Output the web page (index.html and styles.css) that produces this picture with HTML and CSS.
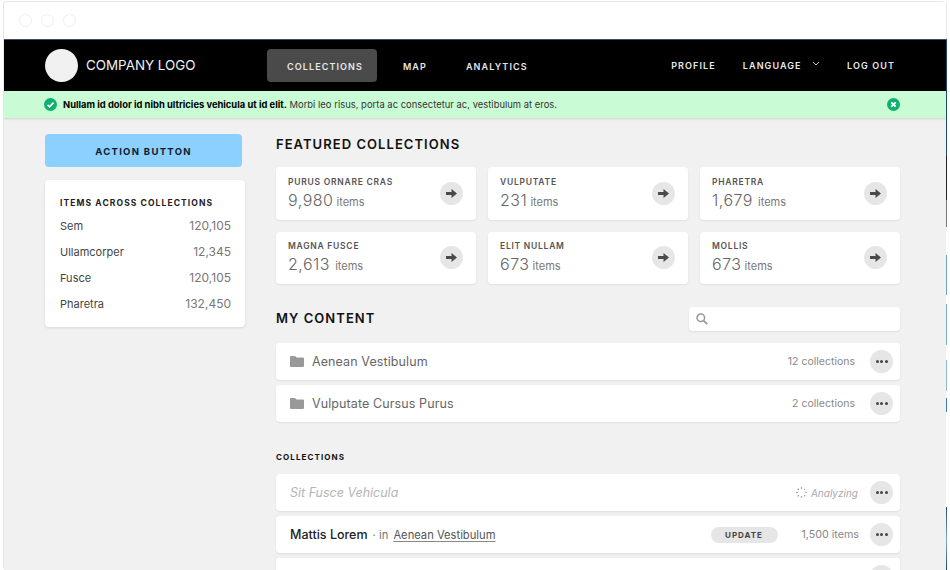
FILE: index.html
```html
<!DOCTYPE html>
<html>
<head>
    <meta charset="UTF-8">
    <title>Collections</title>
    <link rel="stylesheet" href="styles.css">
</head>
<body>
    <div class="window">
        <div class="titlebar">
            <span class="light"></span>
            <span class="light"></span>
            <span class="light"></span>
        </div>
        <div class="nav">
            <div class="logo">
                <span class="logo-mark"></span>
                <span class="logo-text">COMPANY LOGO</span>
            </div>
            <ul class="nav-left">
                <li class="current">COLLECTIONS</li>
                <li>MAP</li>
                <li>ANALYTICS</li>
            </ul>
            <ul class="nav-right">
                <li>PROFILE</li>
                <li class="lang">LANGUAGE
                    <svg width="8" height="5" viewBox="0 0 8 5"><path d="M1 1l3 3 3-3" fill="none" stroke="#ccc" stroke-width="1"/></svg>
                </li>
                <li>LOG OUT</li>
            </ul>
        </div>
        <div class="banner">
            <svg class="banner-icon" width="13" height="13" viewBox="0 0 13 13"><circle cx="6.5" cy="6.5" r="6.5" fill="#10b070"/><path d="M3.5 6.8l2.1 2.1 3.9-4.2" fill="none" stroke="#fff" stroke-width="1.7"/></svg>
            <p><b>Nullam id dolor id nibh ultricies vehicula ut id elit.</b> Morbi leo risus, porta ac consectetur ac, vestibulum at eros.</p>
            <svg width="13" height="13" viewBox="0 0 13 13"><circle cx="6.5" cy="6.5" r="6.5" fill="#10b070"/><path d="M4.3 4.3l4.4 4.4M8.7 4.3l-4.4 4.4" fill="none" stroke="#fff" stroke-width="1.9"/></svg>
        </div>
        <div class="content">
            <div class="side">
                <div class="action">ACTION BUTTON</div>
                <div class="totals">
                    <h4>ITEMS ACROSS COLLECTIONS</h4>
                    <div class="total"><span>Sem</span><span class="num">120,105</span></div>
                    <div class="total"><span>Ullamcorper</span><span class="num">12,345</span></div>
                    <div class="total"><span>Fusce</span><span class="num">120,105</span></div>
                    <div class="total"><span>Pharetra</span><span class="num">132,450</span></div>
                </div>
            </div>
            <div class="main">
                <h2>FEATURED COLLECTIONS</h2>
                <div class="cards">
                    <div class="card">
                        <div><h5>PURUS ORNARE CRAS</h5><p class="count"><span>9,980</span> items</p></div>
                        <span class="round"><svg width="11" height="9" viewBox="0 0 11 9"><path d="M0 3h5.5V0L11 4.5 5.5 9V6H0z" fill="#4a4a4a"/></svg></span>
                    </div>
                    <div class="card">
                        <div><h5>VULPUTATE</h5><p class="count"><span>231</span> items</p></div>
                        <span class="round"><svg width="11" height="9" viewBox="0 0 11 9"><path d="M0 3h5.5V0L11 4.5 5.5 9V6H0z" fill="#4a4a4a"/></svg></span>
                    </div>
                    <div class="card">
                        <div><h5>PHARETRA</h5><p class="count"><span class="spaced">1,679</span> items</p></div>
                        <span class="round"><svg width="11" height="9" viewBox="0 0 11 9"><path d="M0 3h5.5V0L11 4.5 5.5 9V6H0z" fill="#4a4a4a"/></svg></span>
                    </div>
                    <div class="card">
                        <div><h5>MAGNA FUSCE</h5><p class="count"><span class="spaced">2,613</span> items</p></div>
                        <span class="round"><svg width="11" height="9" viewBox="0 0 11 9"><path d="M0 3h5.5V0L11 4.5 5.5 9V6H0z" fill="#4a4a4a"/></svg></span>
                    </div>
                    <div class="card">
                        <div><h5>ELIT NULLAM</h5><p class="count"><span>673</span> items</p></div>
                        <span class="round"><svg width="11" height="9" viewBox="0 0 11 9"><path d="M0 3h5.5V0L11 4.5 5.5 9V6H0z" fill="#4a4a4a"/></svg></span>
                    </div>
                    <div class="card">
                        <div><h5>MOLLIS</h5><p class="count"><span>673</span> items</p></div>
                        <span class="round"><svg width="11" height="9" viewBox="0 0 11 9"><path d="M0 3h5.5V0L11 4.5 5.5 9V6H0z" fill="#4a4a4a"/></svg></span>
                    </div>
                </div>
                <div class="content-head">
                    <h2>MY CONTENT</h2>
                    <div class="search">
                        <svg width="12" height="12" viewBox="0 0 12 12"><circle cx="4.8" cy="4.8" r="3.8" fill="none" stroke="#999" stroke-width="1.5"/><path d="M7.6 7.6l3.6 3.6" stroke="#999" stroke-width="1.8"/></svg>
                    </div>
                </div>
                <div class="row">
                    <svg class="folder" width="14" height="11" viewBox="0 0 14 11"><path d="M1 0h4l1.5 1.5H13a1 1 0 0 1 1 1V10a1 1 0 0 1-1 1H1a1 1 0 0 1-1-1V1a1 1 0 0 1 1-1z" fill="#999"/></svg>
                    <span class="folder-name">Aenean Vestibulum</span>
                    <span class="meta">12 collections</span>
                    <span class="round"><i></i><i></i><i></i></span>
                </div>
                <div class="row">
                    <svg class="folder" width="14" height="11" viewBox="0 0 14 11"><path d="M1 0h4l1.5 1.5H13a1 1 0 0 1 1 1V10a1 1 0 0 1-1 1H1a1 1 0 0 1-1-1V1a1 1 0 0 1 1-1z" fill="#999"/></svg>
                    <span class="folder-name">Vulputate Cursus Purus</span>
                    <span class="meta">2 collections</span>
                    <span class="round"><i></i><i></i><i></i></span>
                </div>
                <h3>COLLECTIONS</h3>
                <div class="row">
                    <span class="pending">Sit Fusce Vehicula</span>
                    <svg class="spinner" width="11" height="11" viewBox="0 0 11 11"><g fill="#888"><circle cx="5.5" cy="1" r=".8"/><circle cx="8.7" cy="2.3" r=".6"/><circle cx="10" cy="5.5" r=".7"/><circle cx="8.7" cy="8.7" r=".7"/><circle cx="5.5" cy="10" r=".8"/><circle cx="2.3" cy="8.7" r=".8"/><circle cx="1" cy="5.5" r=".8"/><circle cx="2.3" cy="2.3" r=".8"/></g></svg>
                    <span class="analyzing">Analyzing</span>
                    <span class="round"><i></i><i></i><i></i></span>
                </div>
                <div class="row">
                    <span class="name">Mattis Lorem</span>
                    <span class="where">&middot; in <u>Aenean Vestibulum</u></span>
                    <span class="update">UPDATE</span>
                    <span class="meta items">1,500 items</span>
                    <span class="round"><i></i><i></i><i></i></span>
                </div>
                <div class="row">
                    <span class="round last"><i></i><i></i><i></i></span>
                </div>
            </div>
        </div>
    </div>
</body>
</html>
```

FILE: styles.css
```css
body, div, ul, li, p, h2, h3, h4, h5 {
    margin: 0;
    padding: 0;
}
ul {
    list-style: none;
}
html, body {
    height: 570px;
    overflow: hidden;
}
body {
    background-color: #ffffff;
    /* sliver of the picture behind the window, along the right edge */
    background-image: linear-gradient(#ffffff 2px, #e6e9ec 2px, #e6e9ec 39px, #1f4a70 39px, #1f4a70 156px, #222222 156px, #222222 200px, #777777 200px, #777777 227px, #ffffff 227px, #ffffff 255px, #6fa8b8 255px, #6fa8b8 295px, #ffffff 295px, #ffffff 304px, #7fb0bc 304px, #7fb0bc 345px, #ffffff 345px, #ffffff 360px, #8fbcc6 360px, #8fbcc6 391px, #ffffff 391px, #ffffff 398px, #3f7f9f 398px, #3f7f9f 412px, #ffffff 412px, #ffffff 507px, #1f4a70 507px, #7fb0bc 540px, #1f4a70 570px);
    background-size: 1px 570px;
    background-position: 946px 0;
    background-repeat: no-repeat;
    font-family: Inter, "Liberation Sans", sans-serif;
    color: #4a4a4a;
}
.window {
    width: 942px;
    height: 568px;
    margin: 2px 0 0 4px;
    background-color: #f1f1f1;
    overflow: hidden;
    box-shadow: -1px -1px 0 #e6e9ec;
    border-radius: 3px 3px 0 0;
}
.titlebar {
    display: flex;
    align-items: center;
    gap: 9px;
    height: 37px;
    padding-left: 15px;
    background-color: #ffffff;
}
.light {
    width: 13px;
    height: 13px;
    box-sizing: border-box;
    border: 1px solid #eeeeee;
    border-radius: 50%;
}
.nav {
    display: flex;
    align-items: center;
    height: 51px;
    padding: 0 51px 0 41px;
    background-color: #000000;
    border-top: 1px solid #3c4f66;
    color: #e8e8e8;
    font-size: 9px;
    font-weight: 600;
    letter-spacing: 1.1px;
}
.logo {
    display: flex;
    align-items: center;
    gap: 8px;
    width: 222px;
}
.logo-mark {
    width: 33px;
    height: 33px;
    background-color: #f1f1f1;
    border-radius: 50%;
}
.logo-text {
    margin-bottom: 2px;
    font-size: 13.4px;
    font-weight: 400;
    letter-spacing: 0;
    color: #f1f1f1;
}
.nav-left, .nav-right {
    display: flex;
    align-items: center;
}
.nav-left li {
    height: 33px;
    line-height: 35px;
    padding: 0 13px;
    margin-right: 13px;
    border-radius: 4px;
}
.nav-left li.current {
    padding: 0 14px 0 20px;
    background-color: #4a4a4a;
}
.nav-right {
    margin-left: auto;
    gap: 27px;
}
.lang svg {
    margin: 0 0 3px 7px;
}
.banner {
    display: flex;
    align-items: center;
    height: 27px;
    padding: 0 46px 0 40px;
    background-color: #c9fbd4;
    box-shadow: 0 1px 2px rgba(0, 0, 0, 0.15);
    font-size: 9.4px;
    color: #333333;
}
.banner p {
    flex: 1;
    margin-left: 6px;
    letter-spacing: 0.03px;
}
.banner b {
    color: #000000;
    letter-spacing: 0;
}
.content {
    display: flex;
    gap: 31px;
    padding: 16px 46px 0 41px;
}
.side {
    width: 200px;
    flex-shrink: 0;
}
.action {
    width: 197px;
    height: 33px;
    line-height: 36px;
    background-color: #8bd0ff;
    border-radius: 4px;
    text-align: center;
    font-size: 9.5px;
    font-weight: 700;
    letter-spacing: 1.3px;
    color: #0c1c2c;
}
.totals {
    height: 147px;
    box-sizing: border-box;
    margin-top: 13px;
    padding: 18px 14px 0 15px;
    background-color: #ffffff;
    border-radius: 4px;
    box-shadow: 0 1px 3px rgba(0, 0, 0, 0.1);
}
.totals h4 {
    font-size: 8.5px;
    font-weight: 700;
    letter-spacing: 1.1px;
    color: #222222;
    line-height: 11px;
    margin-bottom: 4px;
}
.total {
    display: flex;
    justify-content: space-between;
    height: 26px;
    line-height: 26px;
    font-size: 11px;
    color: #444444;
}
.num {
    font-size: 12px;
    color: #777777;
}
.main {
    flex: 1;
}
h2 {
    font-size: 13px;
    font-weight: 600;
    letter-spacing: 1.05px;
    color: #111111;
    line-height: 18px;
}
.main > h2 {
    margin-top: 1px;
}
.cards {
    display: grid;
    grid-template-columns: repeat(3, 1fr);
    gap: 12px;
    margin-top: 14px;
}
.card, .row, .search {
    background-color: #ffffff;
    border-radius: 4px;
    box-shadow: 0 1px 2px rgba(0, 0, 0, 0.08);
}
.card {
    display: flex;
    align-items: center;
    justify-content: space-between;
    height: 52.5px;
    padding: 0 13px 0 12px;
    box-sizing: border-box;
}
.card h5 {
    margin-top: 2px;
    font-size: 8.5px;
    font-weight: 600;
    letter-spacing: 0.75px;
    color: #555555;
    line-height: 11px;
}
.count {
    margin-top: 2px;
    font-size: 11px;
    color: #777777;
    line-height: 20px;
}
.count span {
    font-size: 16px;
    font-weight: 300;
    letter-spacing: 0.5px;
    color: #666666;
}
.count .spaced {
    margin-right: 2px;
}
.round {
    display: flex;
    align-items: center;
    justify-content: center;
    gap: 1.5px;
    flex-shrink: 0;
    width: 23px;
    height: 23px;
    background-color: #e6e6e6;
    border-radius: 50%;
}
.round i {
    width: 3px;
    height: 3px;
    background-color: #444444;
    border-radius: 50%;
}
.content-head {
    display: flex;
    align-items: center;
    justify-content: space-between;
    margin-top: 23px;
}
.content-head h2 {
    margin-bottom: 2px;
}
.search {
    display: flex;
    align-items: center;
    width: 211px;
    height: 24px;
    padding-left: 7px;
    box-sizing: border-box;
}
.row {
    display: flex;
    align-items: center;
    height: 37px;
    padding: 0 7px 0 14px;
    margin-top: 5px;
    box-sizing: border-box;
    font-size: 12.5px;
}
.content-head + .row {
    margin-top: 12px;
}
.folder {
    margin-right: 8px;
}
.folder-name {
    color: #666666;
    letter-spacing: 0.1px;
}
.meta {
    margin: 0 15px 0 auto;
    font-size: 10.5px;
    color: #888888;
}
.meta.items {
    margin: 0 11px 0 0;
    font-size: 10.7px;
}
h3 {
    margin: 29px 0 11px;
    font-size: 8px;
    font-weight: 700;
    letter-spacing: 1.1px;
    color: #111111;
    line-height: 12px;
}
.pending {
    font-style: italic;
    color: #b5b5b5;
}
.spinner {
    margin: 0 4px 0 auto;
}
.analyzing {
    margin-right: 12px;
    font-size: 10px;
    font-style: italic;
    color: #aaaaaa;
}
.name {
    color: #222222;
    font-weight: 500;
}
.where {
    margin-left: 5px;
    font-size: 11.2px;
    color: #777777;
}
.where u {
    margin-left: 2px;
    color: #555555;
    text-decoration-color: #888888;
    text-underline-offset: 2px;
}
.update {
    width: 67px;
    height: 16px;
    line-height: 17px;
    margin: 0 24px 0 auto;
    background-color: #e6e6e6;
    border-radius: 8px;
    text-align: center;
    font-size: 8px;
    font-weight: 700;
    letter-spacing: 1px;
    color: #444444;
}
.last {
    margin-left: auto;
}
```
